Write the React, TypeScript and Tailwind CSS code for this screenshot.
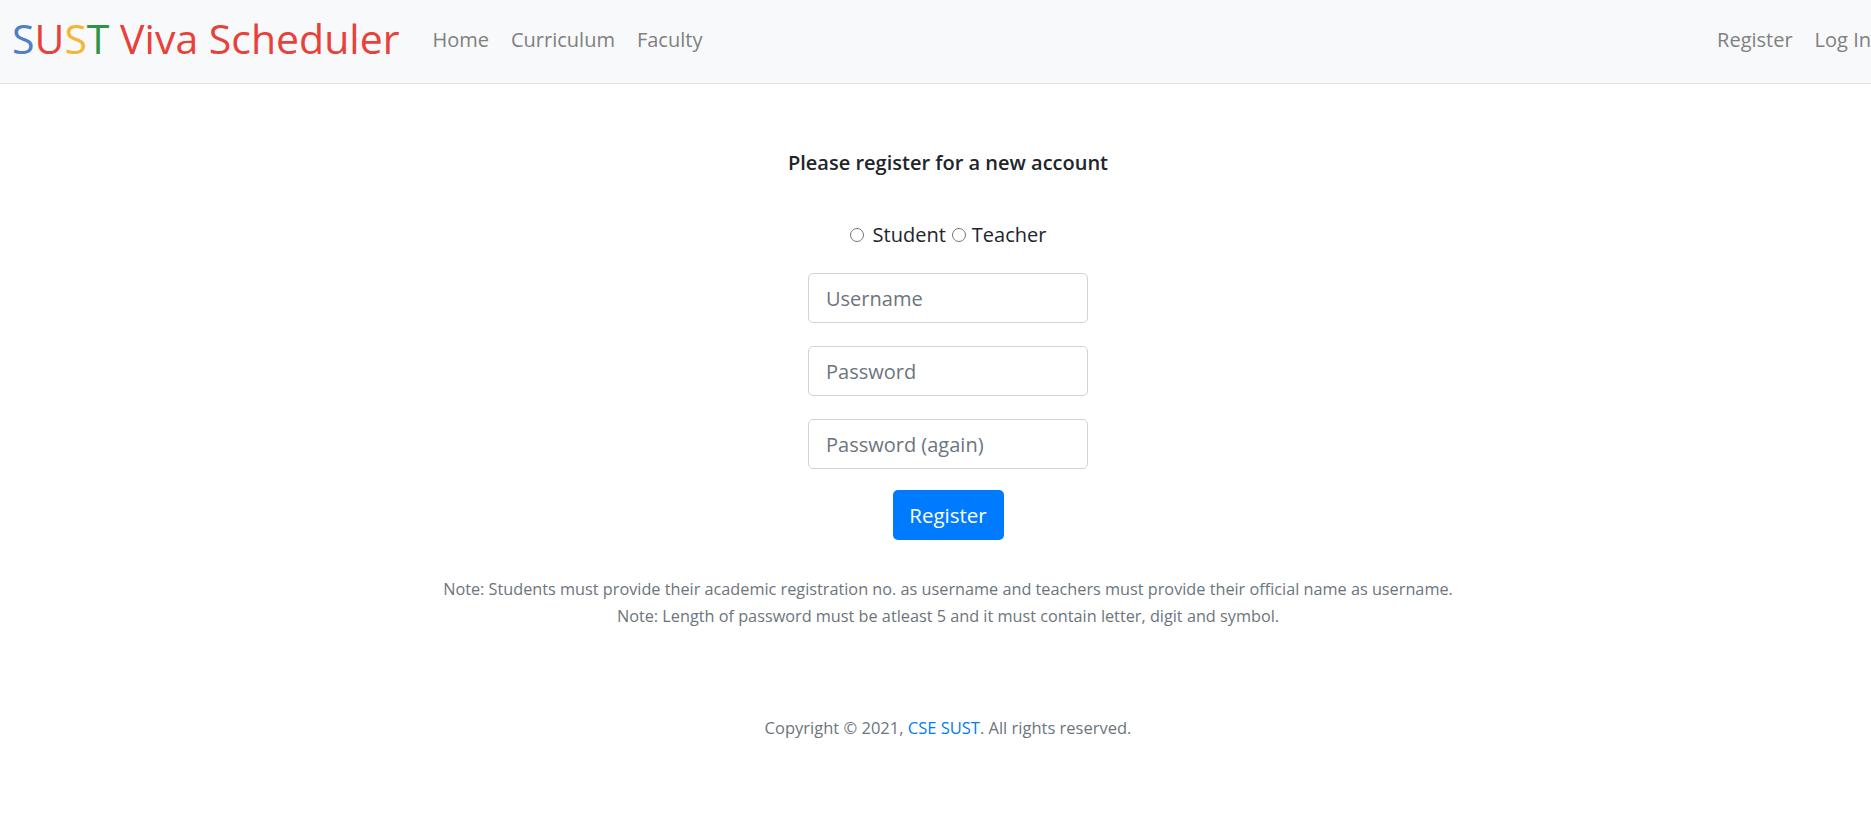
import { useState } from "react";

const font = { fontFamily: '"Open Sans", "Noto Sans", sans-serif' };

const nav = ["Home", "Curriculum", "Faculty"];

export default function App() {
  const [role, setRole] = useState("");

  return (
    <div className="min-h-screen w-full overflow-hidden bg-white text-[#212529]" style={font}>
      {/* page is a little wider than the window, so the right end is cut off */}
      <div className="w-[1896px]">
        <header className="flex h-[84px] items-center border-b border-[#dfe1e4] bg-[#f8f9fa] pl-[12px] pr-[25px]">
          <a href="#" className="mr-[33px] -mt-[6px] text-[41px] leading-none">
            <span className="text-[#4f80c5]">S</span>
            <span className="text-[#e8413a]">U</span>
            <span className="text-[#f5b535]">S</span>
            <span className="text-[#2e9447]">T</span>
            <span className="text-[#e8413a]"> Viva Scheduler</span>
          </a>
          <nav className="-mt-[4px] flex items-center gap-[22px] text-[20px] text-[#808080]">
            {nav.map((n) => (
              <a key={n} href="#">
                {n}
              </a>
            ))}
          </nav>
          <div className="-mt-[4px] ml-auto flex gap-[22px] whitespace-nowrap text-[20px] text-[#808080]">
            <a href="#">Register</a>
            <a href="#">Log In</a>
          </div>
        </header>

        <main className="flex flex-col items-center">
          <h5 className="mt-[69px] text-[20px] font-semibold leading-none text-[#212529]">
            Please register for a new account
          </h5>

          <div className="mt-[52px] flex items-center text-[20px] leading-none">
            <label className="flex items-center">
              <input
                type="radio"
                name="role"
                checked={role === "student"}
                onChange={() => setRole("student")}
                className="mr-[9px] h-[14px] w-[14px]"
              />
              Student
            </label>
            <label className="ml-[6px] flex items-center">
              <input
                type="radio"
                name="role"
                checked={role === "teacher"}
                onChange={() => setRole("teacher")}
                className="mr-[6px] h-[14px] w-[14px]"
              />
              Teacher
            </label>
          </div>

          <form className="mt-[28px] flex w-[280px] flex-col items-center gap-[23px]">
            {["Username", "Password", "Password (again)"].map((p) => (
              <input
                key={p}
                type={p === "Username" ? "text" : "password"}
                placeholder={p}
                className="h-[50px] w-full rounded-[5px] border border-[#ced4da] px-[17px] text-[20px] text-[#495057] outline-none placeholder:text-[#6c757d]"
              />
            ))}
            <button
              type="button"
              className="-mt-[2px] h-[50px] w-[111px] rounded-[5px] bg-[#007bff] text-[20.5px] text-white"
            >
              Register
            </button>
          </form>

          <div className="mt-[36px] text-center text-[16.25px] leading-[27px] text-[#6c757d]">
            <p>
              Note: Students must provide their academic registration no. as username and teachers must
              provide their official name as username.
            </p>
            <p>Note: Length of password must be atleast 5 and it must contain letter, digit and symbol.</p>
          </div>

          <footer className="mt-[86px] text-[16.5px] text-[#6c757d]">
            Copyright © 2021, <a href="#" className="text-[#007bff]">CSE SUST</a>. All rights reserved.
          </footer>
        </main>
      </div>
    </div>
  );
}
